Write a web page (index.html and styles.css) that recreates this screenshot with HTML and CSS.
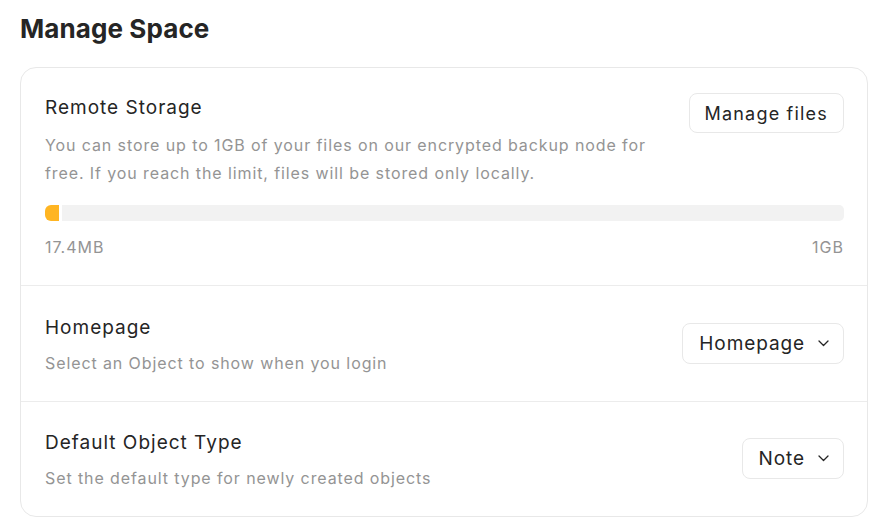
FILE: index.html
```html
<!DOCTYPE html>
<html lang="en">
<head>
<meta charset="utf-8">
<title>Manage Space</title>
<link rel="stylesheet" href="styles.css">
</head>
<body>
<h1 class="page-title">Manage Space</h1>
<div class="card">
  <section class="row row-storage">
    <div class="row-main">
      <div class="row-title">Remote Storage</div>
      <div class="row-desc">You can store up to 1GB of your files on our encrypted backup node for free. If you reach the limit, files will be stored only locally.</div>
    </div>
    <button class="btn">Manage files</button>
  </section>
  <div class="storage">
    <div class="bar">
      <div class="bar-fill" style="width:14px"></div>
      <div class="bar-track"></div>
    </div>
    <div class="bar-labels"><span>17.4MB</span><span>1GB</span></div>
  </div>
  <section class="row row-select">
    <div class="row-main">
      <div class="row-title">Homepage</div>
      <div class="row-desc">Select an Object to show when you login</div>
    </div>
    <button class="select">Homepage<svg class="chev" width="11" height="7" viewBox="0 0 11 7"><path d="M1 1l4.5 4.5L10 1" fill="none" stroke="#252525" stroke-width="1.3" stroke-linecap="round" stroke-linejoin="round"/></svg></button>
  </section>
  <section class="row row-select last">
    <div class="row-main">
      <div class="row-title">Default Object Type</div>
      <div class="row-desc">Set the default type for newly created objects</div>
    </div>
    <button class="select">Note<svg class="chev" width="11" height="7" viewBox="0 0 11 7"><path d="M1 1l4.5 4.5L10 1" fill="none" stroke="#252525" stroke-width="1.3" stroke-linecap="round" stroke-linejoin="round"/></svg></button>
  </section>
</div>
</body>
</html>
```
FILE: styles.css
```css
* { box-sizing: border-box; }
html, body { margin: 0; background: #ffffff; }
body {
  font-family: Inter, "Noto Sans", sans-serif;
  color: #252525;
  padding: 13px 23px 0 20px;
}
.page-title {
  margin: 0;
  font-size: 26px;
  line-height: 32px;
  font-weight: 700;
  letter-spacing: 0.1px;
  color: #252525;
}
.card {
  margin-top: 22px;
  border: 1px solid #e8e8e8;
  border-radius: 16px;
}
.row {
  display: flex;
  justify-content: space-between;
  padding: 27px 23px 24px 24px;
  border-top: 1px solid #ececec;
}
.row-storage { border-top: none; padding-bottom: 0; }
.row-main { display: flex; flex-direction: column; }
.row-title {
  font-size: 19px;
  line-height: 26px;
  letter-spacing: 1px;
}
.row-desc {
  font-size: 16px;
  line-height: 28px;
  letter-spacing: 0.9px;
  color: #949494;
  margin-top: 10px;
  max-width: 618px;
}
.row-select { align-items: center; padding-top: 29px; }
.row-select .row-desc { margin-top: 8px; }
.row-select.last { padding-top: 28px; padding-bottom: 24px; }
.btn, .select {
  font-family: inherit;
  color: #252525;
  background: #ffffff;
  border: 1px solid #e8e8e8;
  border-radius: 8px;
  cursor: pointer;
}
.btn {
  align-self: flex-start;
  margin-top: -2px;
  height: 40px;
  padding: 0 15px;
  font-size: 18px;
  letter-spacing: 1.2px;
  flex-shrink: 0;
}
.select {
  display: flex;
  align-items: center;
  height: 41px;
  padding: 0 14px 0 16px;
  margin-bottom: 6px;
  font-size: 19px;
  letter-spacing: 0.9px;
}
.chev { margin-left: 13px; margin-top: 1px; }
.storage {
  padding: 18px 23px 24px 24px;
}
.bar {
  display: flex;
  gap: 3px;
  height: 16px;
}
.bar-fill {
  background: #ffb522;
  border-radius: 6px 0 0 6px;
}
.bar-track {
  flex: 1;
  background: #f2f2f2;
  border-radius: 0 5px 5px 0;
}
.bar-labels {
  display: flex;
  justify-content: space-between;
  margin-top: 12px;
  font-size: 16px;
  line-height: 28px;
  letter-spacing: 1px;
  color: #949494;
}
```
